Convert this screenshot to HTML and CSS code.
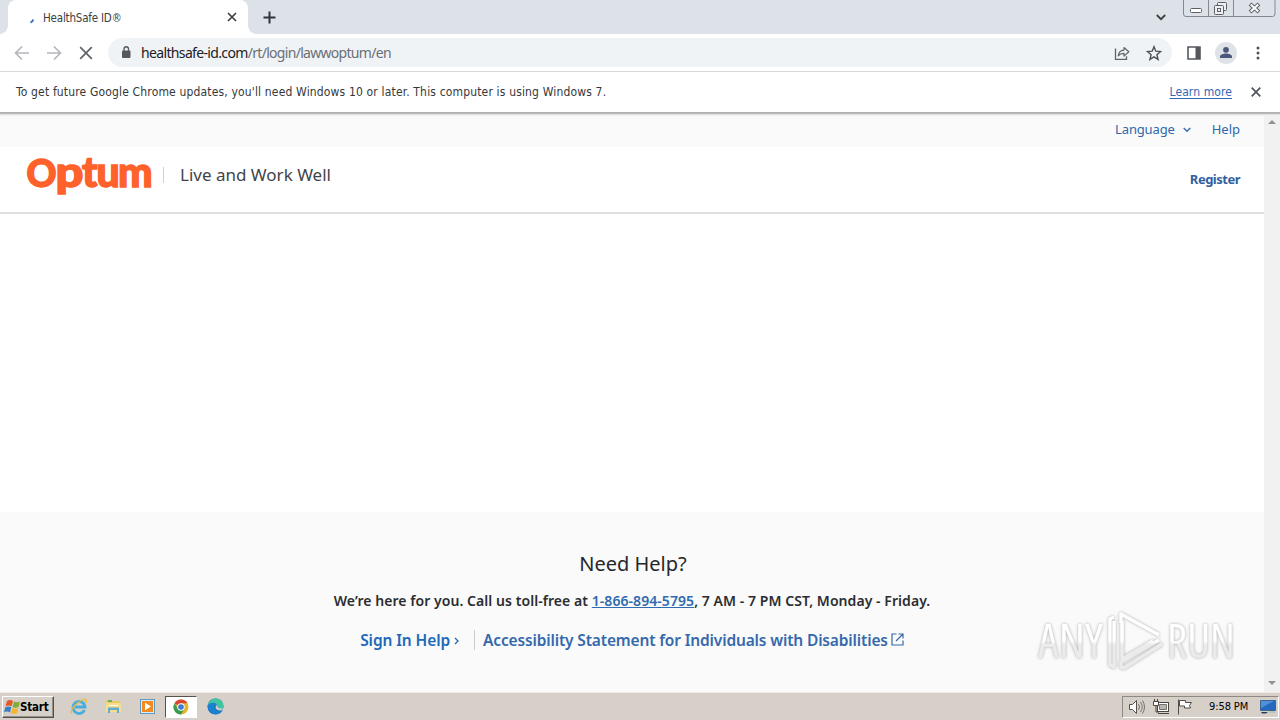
FILE: index.html
```html
<!DOCTYPE html>
<html lang="en">
<head>
<meta charset="utf-8">
<title>HealthSafe ID®</title>
<link rel="stylesheet" href="styles.css">
</head>
<body>
<div class="screen">
  <header class="tabstrip">
    <div class="tab">
      <svg class="spinner" width="16" height="16" viewBox="0 0 16 16"><path d="M6.500 11.500Q8.700 10.500 9.300 8.500" fill="none" stroke="#3b6fc4" stroke-width="2"/></svg>
      <span class="tab-title">HealthSafe ID®</span>
      <svg class="tab-close" width="10" height="10" viewBox="0 0 10 10"><path d="M1 1l8 8M9 1l-8 8" stroke="#3c4043" stroke-width="1.700"/></svg>
    </div>
    <svg class="newtab" width="13" height="13" viewBox="0 0 13 13"><path d="M6.500 .5v12M.5 6.500h12" stroke="#30343a" stroke-width="2"/></svg>
    <svg class="tabsearch" width="10" height="7" viewBox="0 0 10 7"><path d="M.8 1L5 5.200 9.200 1" fill="none" stroke="#3c4043" stroke-width="1.800"/></svg>
    <svg class="winbuttons" width="93" height="18" viewBox="0 0 93 18">
      <path d="M.5 0v14q0 2.500 2.500 2.500h86.500q2.500 0 2.500-2.500V0M25.500 0v16.500M50.500 0v16.500" fill="none" stroke="#85898f"/>
      <rect x="7.500" y="8.500" width="11" height="4" rx="1" fill="#fff" stroke="#5c6066"/>
      <g fill="#eef0f3" stroke="#5c6066"><rect x="34.500" y="2.500" width="9" height="8" rx="1"/><rect x="31.500" y="5.500" width="9" height="9" rx="1"/><rect x="34.500" y="8.500" width="3" height="3"/></g>
      <path d="M67 4l9 8M76 4l-9 8" stroke="#5c6066" stroke-width="4"/><path d="M67.700 4.600l7.600 6.800M75.300 4.600l-7.600 6.800" stroke="#fff" stroke-width="2"/>
    </svg>
  </header>

  <div class="toolbar">
    <svg class="nav" width="16" height="16" viewBox="0 0 16 16"><path d="M15 8H2M8 1.500L1.500 8 8 14.500" fill="none" stroke="#b5b7ba" stroke-width="1.700"/></svg>
    <svg class="nav" width="16" height="16" viewBox="0 0 16 16"><path d="M1 8h13M8 1.500L14.500 8 8 14.500" fill="none" stroke="#b5b7ba" stroke-width="1.700"/></svg>
    <svg class="nav" width="16" height="16" viewBox="0 0 16 16"><path d="M2.200 2.200l11.600 11.600M13.800 2.200L2.200 13.800" stroke="#5f6368" stroke-width="1.700"/></svg>
    <div class="omnibox">
      <svg width="10" height="13" viewBox="0 0 10 13"><rect x="1" y="4.500" width="8.500" height="7.500" rx="1" fill="#54585d"/><path d="M3 5V3a2.250 2.250 0 0 1 4.500 0v2" fill="none" stroke="#54585d" stroke-width="1.300"/></svg>
      <span class="url"><b>healthsafe-id.com</b>/rt/login/lawwoptum/en</span>
      <svg class="share" width="16" height="16" viewBox="0 0 16 16"><path d="M1.500 3.500v10.800h11v-3" fill="none" stroke="#5f6368" stroke-width="1.300"/><path d="M4.300 10.800C4.700 7 7 5.200 10 5.100V2.500l4.800 4.300-4.800 4.300V8.400C7.600 8.300 5.700 9 4.300 10.800z" fill="none" stroke="#5f6368" stroke-width="1.200" stroke-linejoin="round"/></svg>
      <svg width="16" height="16" viewBox="0 0 16 16"><path d="M8 1.700l1.800 4.500 4.800.4-3.700 3.100 1.200 4.700L8 11.900l-4.100 2.500 1.200-4.700L1.400 6.600l4.800-.4z" fill="none" stroke="#4d5156" stroke-width="1.400"/></svg>
    </div>
    <svg class="sidepanel" width="14" height="14" viewBox="0 0 14 14"><path d="M1 1h12v12H1z" fill="#fff" stroke="#54585d" stroke-width="1.600"/><path d="M8.500 1H13v12H8.500z" fill="#54585d"/></svg>
    <svg class="avatar" width="22" height="22" viewBox="0 0 22 22"><circle cx="11" cy="11" r="11" fill="#dfe2e7"/><circle cx="11" cy="7.800" r="2.900" fill="#4b587c"/><path d="M5 16v-1.500c0-2 3.500-3 6-3s6 1 6 3V16z" fill="#4b587c"/></svg>
    <svg class="dots" width="4" height="14" viewBox="0 0 4 14"><g fill="#4f5358"><circle cx="2" cy="2" r="1.500"/><circle cx="2" cy="7" r="1.500"/><circle cx="2" cy="12" r="1.500"/></g></svg>
  </div>

  <div class="infobar">
    <span class="info-text">To get future Google Chrome updates, you'll need Windows 10 or later. This computer is using Windows 7.</span>
    <a class="learn">Learn more</a>
    <svg width="10" height="10" viewBox="0 0 10 10"><path d="M.7.7l8.600 8.600M9.300.7L.7 9.300" stroke="#54585d" stroke-width="1.800"/></svg>
  </div>

  <div class="viewport">
    <main class="page">
      <div class="utility">
        <a class="language">Language</a>
        <svg width="8" height="6" viewBox="0 0 8 6"><path d="M.7 1L4 4.300 7.300 1" fill="none" stroke="#3a6bab" stroke-width="1.400"/></svg>
        <a class="help">Help</a>
      </div>
      <div class="brandbar">
        <svg class="logo" width="126" height="40" viewBox="0 0 126 40"><text y="28"><tspan class="cap" x="0.500">O</tspan></text><text x="29.500" y="28" textLength="28" lengthAdjust="spacingAndGlyphs">p</text><text x="56 70.500 92" y="28">tum</text></svg>
        <span class="rule"></span>
        <span class="product">Live and Work Well</span>
        <a class="register">Register</a>
      </div>
      <div class="content"></div>
      <section class="support">
        <h1 class="need">Need Help?</h1>
        <p class="call">We’re here for you. Call us toll-free at <a>1-866-894-5795</a>, 7 AM - 7 PM CST, Monday - Friday.</p>
        <div class="links">
          <a class="signin">Sign In Help</a>
          <svg class="chev" width="5" height="8" viewBox="0 0 5 8"><path d="M1 1l3 3-3 3" fill="none" stroke="#2468b5" stroke-width="1.300"/></svg>
          <span class="divider"></span>
          <a class="access">Accessibility Statement for Individuals with Disabilities</a>
          <svg class="ext" width="13" height="13" viewBox="0 0 13 13"><path d="M5.500 1H1v11h11V7.500M7.500 1H12v4.500M12 1L5 8" fill="none" stroke="#3569ab" stroke-width="1.200"/></svg>
        </div>
      </section>
    </main>
    <div class="scrollbar"><i class="up"></i><i class="down"></i></div>
    <svg class="watermark" width="210" height="74" viewBox="0 0 210 74">
      <defs><linearGradient id="wm" gradientUnits="userSpaceOnUse" x1="0" y1="0" x2="0" y2="74"><stop offset=".5" stop-color="#fff"/><stop offset=".55" stop-color="#ebebeb"/></linearGradient></defs>
      <g class="wm-art">
        <text x="8" y="54" textLength="65" lengthAdjust="spacingAndGlyphs">ANY</text>
        <text x="137" y="54" textLength="68" lengthAdjust="spacingAndGlyphs">RUN</text>
        <path d="M92 17v38l31-18M84 13l-4 2v46l4 2V17M129 31L91 10v9M132 40L94 64l-3-1v-5l38-22" fill="none" stroke="url(#wm)" stroke-width="3.500" stroke-linejoin="round"/>
      </g>
    </svg>
  </div>

  <footer class="taskbar">
    <div class="start">
      <svg width="17" height="16" viewBox="0 0 17 16"><path d="M3 2q3-2 6 0L7.500 7.300q-3-1.700-6 0z" fill="#e6572a"/><path d="M10 2.500q3 1.500 6 0L14.500 8q-3 1.500-6 0z" fill="#7cae3a"/><path d="M1.300 8.300q3-1.800 6 0L6 13.500q-3-1.800-6 0z" fill="#397fc5"/><path d="M8.300 9q3 1.500 6 0L13 14.200q-3 1.500-6 0z" fill="#f2b72c"/></svg>
      <span>Start</span>
    </div>
    <div class="task ie"><svg width="18" height="18" viewBox="0 0 18 18"><path d="M14.500 12a6 6 0 1 1 .5-3H5" fill="none" stroke="#48aee0" stroke-width="2.800"/><path d="M2 15.500C-1 13 6 4.500 12.500 2c3.500-1.300 4.500 0 3.500 3" fill="none" stroke="#e8bb39" stroke-width="1.300"/></svg></div>
    <div class="task"><svg width="17" height="17" viewBox="0 0 17 17"><path d="M1 3l1-1h4l1 1h8v5H1z" fill="#e9ca66"/><path d="M3 2h4v2H3z" fill="#73aa56"/><path d="M1 5h15v9H1z" fill="#f5de91"/><path d="M3 15V9.500h11V15h-2v-3H5v3z" fill="#64abd0"/><path d="M4 7.500h9" stroke="#fff9dc"/></svg></div>
    <div class="task"><svg width="17" height="17" viewBox="0 0 17 17"><rect x="1.500" y="1.500" width="14" height="14" fill="#d9edfa" stroke="#5d9ac6"/><rect x="3" y="3" width="11" height="11" fill="#f18a21"/><path d="M6 4.700l6 3.800-6 3.800z" fill="#fff"/></svg></div>
    <div class="task active"><svg width="16" height="16" viewBox="0 0 16 16"><circle cx="8" cy="8" r="7.500" fill="#e3b62d"/><path d="M8 8L1.500 4.250A7.500 7.500 0 0 1 14.500 4.250H8z" fill="#d94436"/><path d="M1.500 4.250A7.500 7.500 0 0 0 8 15.500L11.200 10 8 8 4.800 10z" fill="#3b9a50"/><circle cx="8" cy="8" r="3.700" fill="#fff"/><circle cx="8" cy="8" r="2.800" fill="#397bd7"/></svg></div>
    <div class="task"><svg width="17" height="17" viewBox="0 0 17 17"><circle cx="8.500" cy="8.500" r="8" fill="#1674bd"/><path d="M.8 7C2-1.500 16.500-2 16.500 8c0 4-6 4-6.500 1.500C11 7 8 3.500.8 7z" fill="#43c4a0"/><path d="M.8 7c4-3.800 9-2.300 9.200.7-4-1-4 6 5 5.500C11 18.500-.5 17 .8 7z" fill="#1c80ce"/><path d="M9.800 7c-3 3 0 6.200 5.200 5.200 1-.7 1.500-1.500 1.500-2.200-2 1.200-6.300.8-6.700-3z" fill="#d6d0c8"/></svg></div>
    <div class="tray">
      <svg width="18" height="18" viewBox="0 0 18 18"><path d="M1.500 6.500h3l4-4v13l-4-4h-3z" fill="#fff" stroke="#55524e"/><path d="M10.500 6q2 3 0 6M12.500 4q3.500 5 0 10M14.500 2.500q4 6.500 0 13" fill="none" stroke="#77736e"/></svg>
      <svg width="18" height="18" viewBox="0 0 18 18"><rect x="5.500" y="4.500" width="11" height="9" fill="#fff" stroke="#484642"/><path d="M7.500 6.500h7v5h-7z" fill="#b9b6b1" stroke="#77746f"/><path d="M2.500 1v3M5.500 1v3M4 7.500V14h3M6 15.500h11" fill="none" stroke="#484642"/><path d="M1.500 3.500h5v4h-5z" fill="#fff" stroke="#484642"/></svg>
      <svg width="18" height="18" viewBox="0 0 18 18"><path d="M2.500 1.500v15" stroke="#504d49"/><path d="M3.500 2.500h6v2h6l-2 3 1 2.500h-6V8h-5z" fill="#fff" stroke="#504d49"/></svg>
      <span class="clock">9:58 PM</span>
      <svg class="desk" width="16" height="14" viewBox="0 0 16 14"><path d="M.5.5h15v10H.5z" fill="#2668bd" stroke="#3c668e"/><path d="M1 1h13L1 8z" fill="#4d91db"/><path d="M1 12h7l-2 1.500H2z" fill="#2b3e59"/><path d="M9 12h6" stroke="#a0b0c0"/></svg>
    </div>
  </footer>
</div>
</body>
</html>
```
FILE: styles.css
```css
* { box-sizing: border-box; }
body { margin: 0; overflow: hidden; font-family: "Noto Sans", "Open Sans", sans-serif; }
svg { display: block; flex: none; }
.screen { width: 1280px; height: 720px; display: flex; flex-direction: column; background: #fff; }
.screen span, .screen a { white-space: nowrap; }

.tabstrip { height: 34px; background: #dde1e8; display: flex; align-items: center; flex: none; }
.tab { width: 240px; height: 34px; margin-left: 8px; background: #fff; border-radius: 8px 8px 0 0; display: flex; align-items: center; padding: 0 11px 0 16px; position: relative; }
.tab::before, .tab::after { content: ""; position: absolute; bottom: 0; width: 8px; height: 8px; }
.tab::before { left: -8px; background: radial-gradient(circle at 0 0, transparent 7.5px, #fff 8px); }
.tab::after { right: -8px; background: radial-gradient(circle at 100% 0, transparent 7.5px, #fff 8px); }
.spinner { margin-top: 3px; }
.tab-title { margin: 1px 0 0 3px; font: 11.5px/16px "DejaVu Sans Condensed", "DejaVu Sans", sans-serif; color: #3c4043; width: 184px; font-stretch: condensed; letter-spacing: -.2px; }
.newtab { margin-left: 15px; }
.tabsearch { margin-left: auto; }
.winbuttons { margin: 0 4px 0 17px; align-self: flex-start; }

.toolbar { height: 37px; display: flex; align-items: center; flex: none; padding-left: 14px; }
.nav { margin-right: 16px; }
.omnibox { margin-left: -2px; width: 1064px; height: 29px; border-radius: 15px; background: #f0f3f6; display: flex; align-items: center; padding: 0 10px 0 13px; }
.url { margin-left: 10px; font: 14px/20px "Noto Sans", sans-serif; color: #6b6f74; letter-spacing: -.7px; }
.url b { font-weight: 400; color: #202124; letter-spacing: -.65px; }
.share { margin: 0 16px 0 auto; }
.sidepanel { margin-left: 15px; }
.avatar { margin-left: 14px; }
.dots { margin-left: 19px; }

.infobar { height: 41px; border-top: 1px solid #d7d9db; display: flex; align-items: center; flex: none; padding: 0 19px 0 16px; font: 12px/16px "DejaVu Sans Condensed", "DejaVu Sans", sans-serif; font-stretch: condensed; color: #35383b; }
.info-text { letter-spacing: .162px; }
.learn { margin: 0 19px 0 auto; letter-spacing: .1px; color: #3567b5; text-decoration: underline; text-underline-offset: 2px; }

.viewport { height: 580px; flex: none; display: flex; position: relative; border-top: 1px solid #b0b1b2; }
.page { width: 1264px; display: flex; flex-direction: column; }
.utility { height: 34px; background: #fafafa; display: flex; align-items: center; justify-content: flex-end; padding: 0 24px 2px 0; font-size: 13px; line-height: 18px; color: #2d68ac; box-shadow: inset 0 1px #b8b9ba, inset 0 2px #e0e1e1, inset 0 3px #f0f0f0; }
.language { letter-spacing: -.15px; }
.utility svg { margin: 2px 21px 0 8px; }
.brandbar { height: 67px; border-bottom: 2px solid #dfdfdf; display: flex; align-items: center; padding: 0 24px 0 26px; }
.logo { margin-top: -2px; overflow: visible; }
.logo text { font: 900 41px Lato, sans-serif; fill: #ff612b; stroke: #ff612b; stroke-width: 1.4px; }
.logo .cap { font-size: 37px; }
.rule { width: 1px; height: 16px; background: #d0d0d0; margin-left: 11px; margin-top: -9px; }
.product { margin: -10px 0 0 16px; font-size: 17px; line-height: 24px; color: #424448; }
.register { margin: -2px 0 0 auto; font-size: 13px; font-weight: 700; letter-spacing: -.5px; color: #315f9f; }
.content { height: 298px; }
.support { flex: 1; background: #fafafa; display: flex; flex-direction: column; align-items: center; }
.need { margin: 38px 0 0 2px; font-size: 20px; line-height: 28px; font-weight: 400; color: #25272b; }
.call { margin: 13px 0 0; font-size: 14px; line-height: 20px; font-weight: 600; letter-spacing: .06px; color: #2b2d31; white-space: nowrap; }
.call a { color: #306baf; text-decoration: underline; }
.links { margin-top: 17px; display: flex; align-items: center; font-size: 15.5px; line-height: 24px; font-weight: 600; color: #3569ab; }
.signin { color: #2069b8; letter-spacing: -.1px; }
.access { margin-top: -1px; letter-spacing: -.15px; }
.chev { margin: 2px 0 0 4px; }
.divider { width: 1px; height: 20px; background: #ccc; margin: 0 8px 0 15px; }
.ext { margin: -2px 0 0 3px; }
.scrollbar { width: 16px; background: #f1f1f1; display: flex; flex-direction: column; align-items: center; justify-content: space-between; padding: 7px 0 7px; box-shadow: inset 0 1px #b8b9ba, inset 0 2px #dfdfdf; }
.scrollbar i { border: 4px solid transparent; }
.up { border-top: 0 !important; border-bottom-color: #929292 !important; }
.down { border-bottom: 0 !important; border-top-color: #929292 !important; }
.watermark { position: absolute; left: 1030px; top: 491px; overflow: visible; }
.wm-art { filter: drop-shadow(0 0 1.5px #aaa); }
.wm-art text { font: 400 48px "Open Sans", sans-serif; font-stretch: condensed; fill: url(#wm); }

.taskbar { height: 28px; flex: none; background: #d6d0c8; border-top: 1px solid #eeebe6; display: flex; align-items: center; padding-left: 2px; }
.start { width: 52px; height: 22px; border: 1px solid; border-color: #fff #55524e #55524e #fff; box-shadow: inset -1px -1px #938f89; display: flex; align-items: center; padding-left: 1px; font: 700 11.5px/16px "DejaVu Sans Condensed", sans-serif; color: #000; margin-right: 9px; }
.start span { letter-spacing: -.2px; margin-left: -1px; }
.task { width: 32px; height: 22px; display: flex; align-items: center; justify-content: center; margin-right: 2px; }
.active { background: #fff; border: 1px solid; border-color: #56524e #fff #fff #56524e; }
.tray { margin-left: auto; width: 157px; height: 22px; margin-right: 1px; border: 1px solid; border-color: #8e8983 #fff #fff #8e8983; display: flex; align-items: center; padding-left: 5px; gap: 6px; }
.clock { margin-left: 9px; width: 45px; font: 11px/16px "DejaVu Sans Condensed", sans-serif; letter-spacing: -.1px; }
```
